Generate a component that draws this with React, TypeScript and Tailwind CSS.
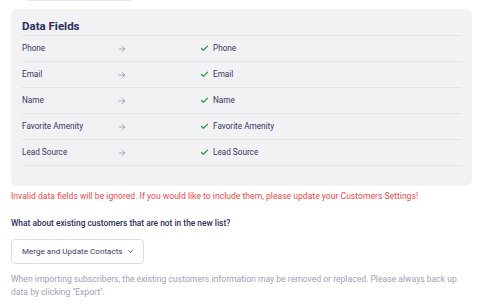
import { ArrowRight, Check, ChevronDown } from "lucide-react";

const fields = ["Phone", "Email", "Name", "Favorite Amenity", "Lead Source"];

export default function App() {
  return (
    <div className="h-[305px] w-[483px] overflow-hidden bg-white font-['Roboto',Arial,sans-serif] text-[#34365f]">
      <div className="-mt-[20px] ml-[25px] h-[21px] w-[108px] rounded-b-[3px] border border-[#e8e8f2]" />
      <div className="mx-[11px] mt-[8px] rounded-[6px] bg-[#f2f2f5] px-[11px] pb-[20px] pt-[8px]">
        <h2 className="text-[11.5px] font-bold leading-[18px] text-[#2c2e5c]">Data Fields</h2>
        <div className="border-t border-[#e2e2e8]">
          {fields.map((f) => (
            <div key={f} className="flex h-[26px] items-center border-b border-[#e2e2e8] text-[8.2px]">
              <div className="w-[95px]">{f}</div>
              <ArrowRight className="size-[10px] text-[#9c9cb6]" strokeWidth={2.2} />
              <div className="ml-[73px] flex items-center gap-[4px]">
                <Check className="size-[9px] text-[#2aa34a]" strokeWidth={3.5} />
                <span>{f}</span>
              </div>
            </div>
          ))}
        </div>
      </div>
      <div className="px-[11px]">
        <p className="mt-[4px] text-[8.6px] leading-[12px] text-[#f24848]">
          Invalid data fields will be ignored. If you would like to include them, please update your Customers Settings!
        </p>
        <p className="mt-[15px] text-[8.4px] font-medium leading-[12px] text-[#2c2e5c]">
          What about existing customers that are not in the new list?
        </p>
        <button className="mt-[10px] flex h-[25px] items-center gap-[4px] whitespace-nowrap rounded-[4px] border border-[#dcdce6] bg-white pl-[10px] pr-[9px] text-[8.1px] text-[#3a3c66]">
          Merge and Update Contacts
          <ChevronDown className="size-[7px]" strokeWidth={3} />
        </button>
        <p className="mt-[9px] text-[8.6px] leading-[13px] text-[#a0a0b8]">
          When importing subscribers, the existing customers information may be removed or replaced. Please always back up
          data by clicking "Export".
        </p>
      </div>
    </div>
  );
}
